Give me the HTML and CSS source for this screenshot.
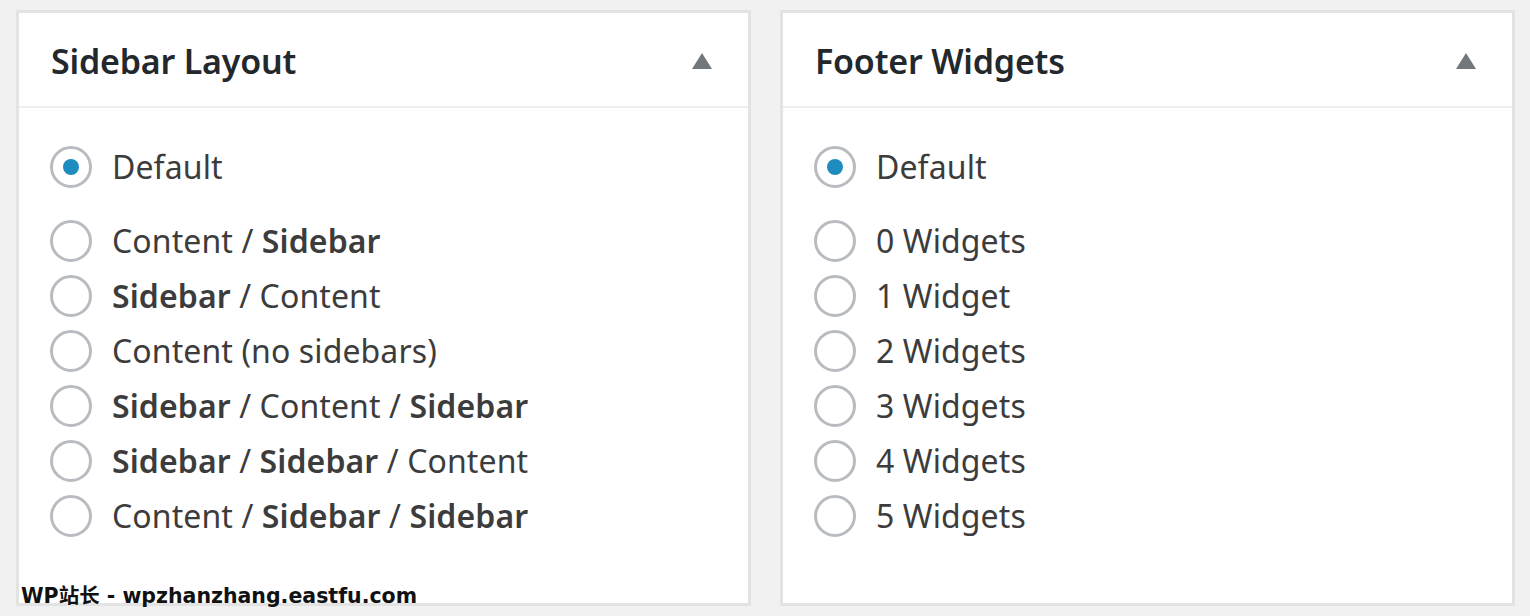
FILE: index.html
```html
<!DOCTYPE html>
<html>
<head>
<meta charset="utf-8">
<link rel="stylesheet" href="styles.css">
</head>
<body>
<div class="page">
  <div class="box">
    <div class="box-head">
      <h2 class="box-title">Sidebar Layout</h2>
      <span class="toggle"></span>
    </div>
    <div class="box-body">
      <label class="opt first"><span class="radio checked"></span><span class="lbl">Default</span></label>
      <label class="opt"><span class="radio"></span><span class="lbl">Content / <b>Sidebar</b></span></label>
      <label class="opt"><span class="radio"></span><span class="lbl"><b>Sidebar</b> / Content</span></label>
      <label class="opt"><span class="radio"></span><span class="lbl">Content (no sidebars)</span></label>
      <label class="opt"><span class="radio"></span><span class="lbl"><b>Sidebar</b> / Content / <b>Sidebar</b></span></label>
      <label class="opt"><span class="radio"></span><span class="lbl"><b>Sidebar</b> / <b>Sidebar</b> / Content</span></label>
      <label class="opt"><span class="radio"></span><span class="lbl">Content / <b>Sidebar</b> / <b>Sidebar</b></span></label>
    </div>
  </div>
  <div class="box">
    <div class="box-head">
      <h2 class="box-title">Footer Widgets</h2>
      <span class="toggle"></span>
    </div>
    <div class="box-body">
      <label class="opt first"><span class="radio checked"></span><span class="lbl">Default</span></label>
      <label class="opt"><span class="radio"></span><span class="lbl">0 Widgets</span></label>
      <label class="opt"><span class="radio"></span><span class="lbl">1 Widget</span></label>
      <label class="opt"><span class="radio"></span><span class="lbl">2 Widgets</span></label>
      <label class="opt"><span class="radio"></span><span class="lbl">3 Widgets</span></label>
      <label class="opt"><span class="radio"></span><span class="lbl">4 Widgets</span></label>
      <label class="opt"><span class="radio"></span><span class="lbl">5 Widgets</span></label>
    </div>
  </div>
</div>
<div class="watermark">WP站长 - wpzhanzhang.eastfu.com</div>
</body>
</html>
```

FILE: styles.css
```css
html, body {
  margin: 0;
  padding: 0;
  background: #f1f1f1;
}
body {
  position: relative;
  width: 1530px;
  height: 616px;
  overflow: hidden;
  font-family: "Noto Sans", "Open Sans", sans-serif;
}
.page {
  display: flex;
  gap: 29px;
  padding: 10px 0 0 16px;
}
.box {
  width: 735px;
  height: 596px;
  box-sizing: border-box;
  background: #fff;
  border: 3px solid #e3e3e3;
}
.box-head {
  height: 93px;
  border-bottom: 2px solid #eeeeee;
  display: flex;
  align-items: center;
  justify-content: space-between;
  padding: 0 36px 0 32px;
}
.box-title {
  margin: 0;
  margin-top: 2px;
  font-size: 34px;
  font-weight: 600;
  color: #23282d;
  letter-spacing: -0.2px;
}
.toggle {
  width: 0;
  height: 0;
  border-left: 10px solid transparent;
  border-right: 10px solid transparent;
  border-bottom: 16px solid #72777c;
  margin-top: 3px;
}
.box-body {
  padding: 31px 0 0 31px;
  display: flex;
  flex-direction: column;
}
.opt {
  display: flex;
  align-items: center;
  height: 55px;
  color: #3c3c3c;
  font-size: 32px;
  letter-spacing: 0.1px;
}
.opt.first {
  margin-bottom: 19px;
}
.opt b {
  font-weight: 600;
}
.radio {
  width: 42px;
  height: 42px;
  box-sizing: border-box;
  border: 3px solid #b8bcc1;
  border-radius: 50%;
  margin-right: 20px;
  display: flex;
  align-items: center;
  justify-content: center;
  flex: none;
}
.radio.checked::after {
  content: "";
  width: 16px;
  height: 16px;
  border-radius: 50%;
  background: #1e8cbe;
}
.watermark {
  position: absolute;
  left: 21px;
  top: 579px;
  font-family: "DejaVu Sans", "Noto Sans CJK SC", sans-serif;
  font-weight: bold;
  font-size: 20.5px;
  color: #111;
}
```
